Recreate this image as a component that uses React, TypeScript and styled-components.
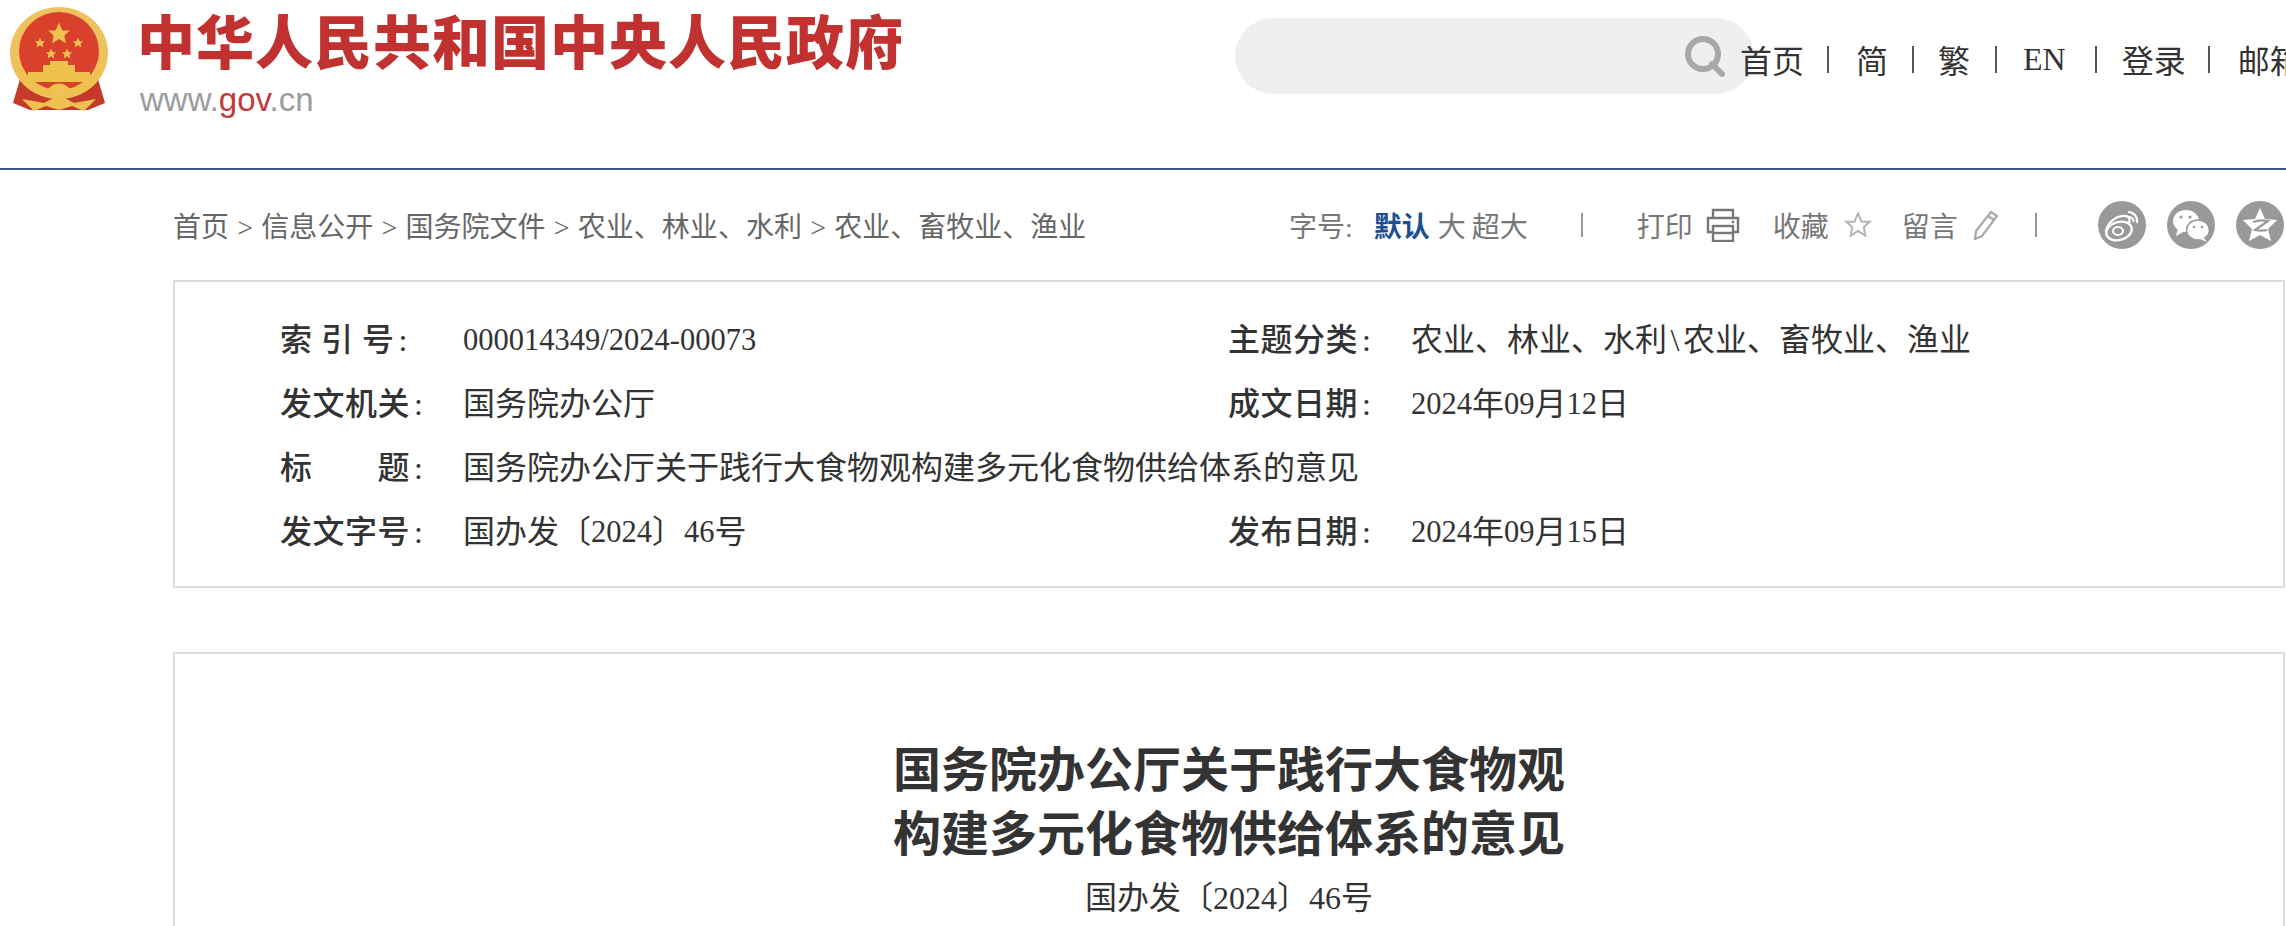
import React from "react";
import styled, { createGlobalStyle } from "styled-components";

const SERIF = `"Liberation Serif", "Noto Sans CJK SC", serif`;

const GlobalStyle = createGlobalStyle`
  html, body {
    margin: 0;
    padding: 0;
    background: #fff;
    overflow: hidden;
    font-family: ${SERIF};
    color: #333;
  }
`;

const Page = styled.div`
  width: 2286px;
  height: 926px;
  overflow: hidden;
`;

const Header = styled.header`
  height: 168px;
  border-bottom: 2px solid #355a88;
  display: flex;
  align-items: flex-start;
  padding-left: 10px;
`;

const Brand = styled.div`
  display: flex;
  gap: 29px;
  padding-top: 7px;
  width: 1225px;
  flex-shrink: 0;
`;

const BrandText = styled.div`
  display: flex;
  flex-direction: column;
`;

const BrandTitle = styled.div`
  font-family: "Noto Sans CJK SC", sans-serif;
  font-size: 58px;
  line-height: 64px;
  font-weight: 900;
  letter-spacing: 1px;
  white-space: nowrap;
  color: #c0312f;
`;

const BrandUrl = styled.div`
  font-family: "Liberation Sans", sans-serif;
  font-size: 33px;
  line-height: 36px;
  margin: 11px 0 0 3px;
  color: #9a9c9e;
  b {
    font-weight: 400;
    color: #c23a3a;
  }
`;

const SearchBar = styled.div`
  margin-top: 18px;
  width: 519px;
  height: 76px;
  border-radius: 38px;
  background: #efefef;
  display: flex;
  justify-content: flex-end;
  align-items: center;
  padding-right: 28px;
  box-sizing: border-box;
  flex-shrink: 0;
`;

const Nav = styled.nav`
  display: flex;
  align-items: center;
  height: 30px;
  margin: 44px 0 0 -14px;
  font-size: 32px;
  color: #333;
  white-space: nowrap;
  flex-shrink: 0;
`;

const NavItem = styled.span<{ $gap: number }>`
  margin-right: ${(p) => p.$gap}px;
`;

const NavSep = styled.i<{ $gap: number }>`
  display: block;
  width: 2px;
  height: 27px;
  background: #555;
  margin-right: ${(p) => p.$gap}px;
`;

const ToolRow = styled.div`
  height: 110px;
  padding-left: 173px;
  display: flex;
  align-items: center;
  white-space: nowrap;
`;

const Crumbs = styled.div`
  width: 1116px;
  font-size: 28px;
  word-spacing: 1.25px;
  color: #666;
  flex-shrink: 0;
`;

const Tools = styled.div`
  display: flex;
  align-items: center;
  font-size: 28px;
  color: #777;
`;

const ToolText = styled.span<{ $active?: boolean; $gap?: number }>`
  color: ${(p) => (p.$active ? "#1c4f91" : "#777")};
  font-weight: ${(p) => (p.$active ? 700 : 400)};
  margin-right: ${(p) => p.$gap ?? 0}px;
`;

const ToolSep = styled.i<{ $gap: number }>`
  display: block;
  width: 2px;
  height: 24px;
  background: #999;
  margin-right: ${(p) => p.$gap}px;
`;

const ToolIcon = styled.span<{ $gap: number }>`
  display: flex;
  margin-right: ${(p) => p.$gap}px;
`;

const ShareIcon = styled.span`
  display: flex;
  margin-right: 21px;
  flex-shrink: 0;
`;

const InfoBox = styled.section`
  margin-left: 173px;
  width: 2112px;
  box-sizing: border-box;
  height: 308px;
  border: 2px solid #ddd;
  padding: 26px 0 0 105px;
  display: grid;
  grid-template-columns: 948px 1fr;
  grid-auto-rows: 64px;
`;

const InfoCell = styled.div`
  display: flex;
  align-items: center;
  font-size: 32px;
  line-height: 64px;
  color: #333;
  white-space: nowrap;
`;

const InfoLabel = styled.span`
  width: 183px;
  font-weight: 500;
  letter-spacing: 0.5px;
  flex-shrink: 0;
`;

const Colon = styled.span`
  margin-left: 4px;
`;

const Num = styled.span`
  font-size: 30.5px;
`;

const Slash = styled.span`
  margin: 0 3.5px;
`;

const Article = styled.article`
  margin: 64px 0 0 173px;
  width: 2112px;
  box-sizing: border-box;
  height: 400px;
  border: 2px solid #ddd;
  border-bottom: none;
  padding-top: 85px;
  text-align: center;
`;

const Title = styled.h1`
  margin: 0;
  font-size: 48px;
  line-height: 64px;
  font-weight: 700;
  color: #333;
`;

const DocNumber = styled.div`
  margin-top: 9px;
  font-size: 32px;
  line-height: 44px;
  color: #333;
`;

const STAR = "M0 -10 L2.9 -3.1 L9.5 -3.1 L4.7 1.2 L5.9 8.1 L0 4.3 L-5.9 8.1 L-4.7 1.2 L-9.5 -3.1 L-2.9 -3.1 Z";

const Emblem = () => (
  <svg width="98" height="105" viewBox="0 0 98 105">
    <path d="M10 72 L3 96 L20 103 L78 103 L95 96 L88 72 Z" fill="#c5392b" />
    <ellipse cx="49" cy="46" rx="49" ry="46" fill="#eec25c" />
    <ellipse cx="49" cy="44" rx="40" ry="39" fill="#d9412c" />
    <g fill="#efc24f">
      <path d={STAR} transform="translate(49 27) scale(1.15)" />
      <path d={STAR} transform="translate(30 36) scale(.55)" />
      <path d={STAR} transform="translate(68 36) scale(.55)" />
      <path d={STAR} transform="translate(41 47) scale(.55)" />
      <path d={STAR} transform="translate(57 47) scale(.55)" />
      <rect x="33" y="58" width="32" height="7" />
      <rect x="40" y="54" width="18" height="5" />
      <rect x="18" y="65" width="62" height="10" />
    </g>
    <path d="M8 62 C16 82 32 84 40 86 C44 78 54 78 58 86 C66 84 82 82 90 62" fill="none" stroke="#efc24f" strokeWidth="7" />
    <path d="M12 92 L34 96 L49 88 L64 96 L86 92 L74 104 L62 99 L49 103 L36 99 L24 104 Z" fill="#efc24f" />
  </svg>
);

const SearchIcon = () => (
  <svg width="42" height="42" viewBox="0 0 42 42" fill="none" stroke="#a8a8a8">
    <circle cx="19" cy="19" r="15" strokeWidth="6" />
    <path d="M28 29 L38 39" strokeWidth="6" strokeLinecap="round" />
  </svg>
);

const PrinterIcon = () => (
  <svg width="34" height="34" viewBox="0 0 34 34" fill="none" stroke="#777" strokeWidth="2.4">
    <path d="M7 10 V2 H27 V10" />
    <path d="M7 24 H2 V10 H32 V24 H27" />
    <rect x="7" y="18" width="20" height="15" />
    <path d="M7 25 H27" />
    <circle cx="27" cy="14" r="1.4" fill="#777" stroke="none" />
  </svg>
);

const StarIcon = () => (
  <svg width="28" height="26" viewBox="-11 -11 22 21" fill="none" stroke="#b4b4b4" strokeWidth="1.6">
    <path d={STAR} />
  </svg>
);

const PencilIcon = () => (
  <svg width="26" height="30" viewBox="0 0 26 30" fill="none" stroke="#aaa" strokeWidth="2.2">
    <path d="M18 2 L24 6 L9 26 L2 29 L3 21 Z" />
    <path d="M15 6 L21 10" />
  </svg>
);

const WeiboIcon = () => (
  <svg width="48" height="48" viewBox="0 0 48 48">
    <circle cx="24" cy="24" r="24" fill="#999" />
    <ellipse cx="21" cy="30" rx="13" ry="9" fill="none" stroke="#fff" strokeWidth="2.4" transform="rotate(-15 21 30)" />
    <ellipse cx="20" cy="30" rx="5" ry="4" fill="none" stroke="#fff" strokeWidth="2" />
    <path d="M8 30 C10 20 20 14 28 15 C32 16 32 19 31 22" fill="none" stroke="#fff" strokeWidth="2.4" />
    <path d="M30 11 C36 11 40 16 39 22 M31 16 C34 16 36 18 35.5 21" fill="none" stroke="#fff" strokeWidth="2" />
  </svg>
);

const WechatIcon = () => (
  <svg width="48" height="48" viewBox="0 0 48 48">
    <circle cx="24" cy="24" r="24" fill="#999" />
    <ellipse cx="19" cy="20" rx="13" ry="11" fill="#fff" />
    <path d="M11 27 L9 35 L18 30 Z" fill="#fff" />
    <ellipse cx="31" cy="29" rx="11.5" ry="10" fill="#fff" stroke="#999" strokeWidth="1.5" />
    <path d="M37 37 L40 41 L33 38 Z" fill="#fff" />
    <g fill="#999">
      <circle cx="14" cy="16" r="1.6" />
      <circle cx="23" cy="16" r="1.6" />
      <circle cx="27" cy="26" r="1.3" />
      <circle cx="35" cy="26" r="1.3" />
    </g>
  </svg>
);

const QzoneIcon = () => (
  <svg width="48" height="48" viewBox="0 0 48 48">
    <circle cx="24" cy="24" r="24" fill="#999" />
    <path d="M24 7 L29 18 L41 19 L32 28 L35 40 L24 34 L13 40 L16 28 L7 19 L19 18 Z" fill="#fff" />
    <path d="M17 21 C22 19 27 19 32 20 L19 29 C24 30 27 30 31 29" fill="none" stroke="#999" strokeWidth="2.2" />
  </svg>
);

const navItems: [string, number, number][] = [
  ["首页", 23, 27],
  ["简", 24, 24],
  ["繁", 25, 26],
  ["EN", 29, 25],
  ["登录", 22, 28],
];

const infoRows: [string, React.ReactNode, string?, React.ReactNode?][] = [
  ["索 引 号", <Num>000014349/2024-00073</Num>, "主题分类", <>农业、林业、水利<Slash>\</Slash>农业、畜牧业、渔业</>],
  ["发文机关", "国务院办公厅", "成文日期", <><Num>2024</Num>年<Num>09</Num>月<Num>12</Num>日</>],
  ["标　　题", "国务院办公厅关于践行大食物观构建多元化食物供给体系的意见"],
  ["发文字号", <>国办发〔<Num>2024</Num>〕<Num>46</Num>号</>, "发布日期", <><Num>2024</Num>年<Num>09</Num>月<Num>15</Num>日</>],
];

export default function App() {
  return (
    <Page>
      <GlobalStyle />
      <Header>
        <Brand>
          <Emblem />
          <BrandText>
            <BrandTitle>中华人民共和国中央人民政府</BrandTitle>
            <BrandUrl>
              www.<b>gov</b>.cn
            </BrandUrl>
          </BrandText>
        </Brand>
        <SearchBar>
          <SearchIcon />
        </SearchBar>
        <Nav>
          {navItems.map(([label, before, after]) => (
            <React.Fragment key={label}>
              <NavItem $gap={before}>{label}</NavItem>
              <NavSep $gap={after} />
            </React.Fragment>
          ))}
          <NavItem $gap={0}>邮箱</NavItem>
        </Nav>
      </Header>

      <ToolRow>
        <Crumbs>首页 &gt; 信息公开 &gt; 国务院文件 &gt; 农业、林业、水利 &gt; 农业、畜牧业、渔业</Crumbs>
        <Tools>
          <ToolText $gap={21}>字号:</ToolText>
          <ToolText $active $gap={8}>默认</ToolText>
          <ToolText $gap={6}>大</ToolText>
          <ToolText $gap={53}>超大</ToolText>
          <ToolSep $gap={54} />
          <ToolText $gap={13}>打印</ToolText>
          <ToolIcon $gap={33}><PrinterIcon /></ToolIcon>
          <ToolText $gap={15}>收藏</ToolText>
          <ToolIcon $gap={30}><StarIcon /></ToolIcon>
          <ToolText $gap={15}>留言</ToolText>
          <ToolIcon $gap={36}><PencilIcon /></ToolIcon>
          <ToolSep $gap={61} />
          <ShareIcon><WeiboIcon /></ShareIcon>
          <ShareIcon><WechatIcon /></ShareIcon>
          <ShareIcon><QzoneIcon /></ShareIcon>
        </Tools>
      </ToolRow>

      <InfoBox>
        {infoRows.map(([label, value, label2, value2]) => (
          <React.Fragment key={label}>
            <InfoCell>
              <InfoLabel>{label}<Colon>:</Colon></InfoLabel>
              {value}
            </InfoCell>
            <InfoCell>
              {label2 && <InfoLabel>{label2}<Colon>:</Colon></InfoLabel>}
              {value2}
            </InfoCell>
          </React.Fragment>
        ))}
      </InfoBox>

      <Article>
        <Title>
          国务院办公厅关于践行大食物观
          <br />
          构建多元化食物供给体系的意见
        </Title>
        <DocNumber>国办发〔2024〕46号</DocNumber>
      </Article>
    </Page>
  );
}
